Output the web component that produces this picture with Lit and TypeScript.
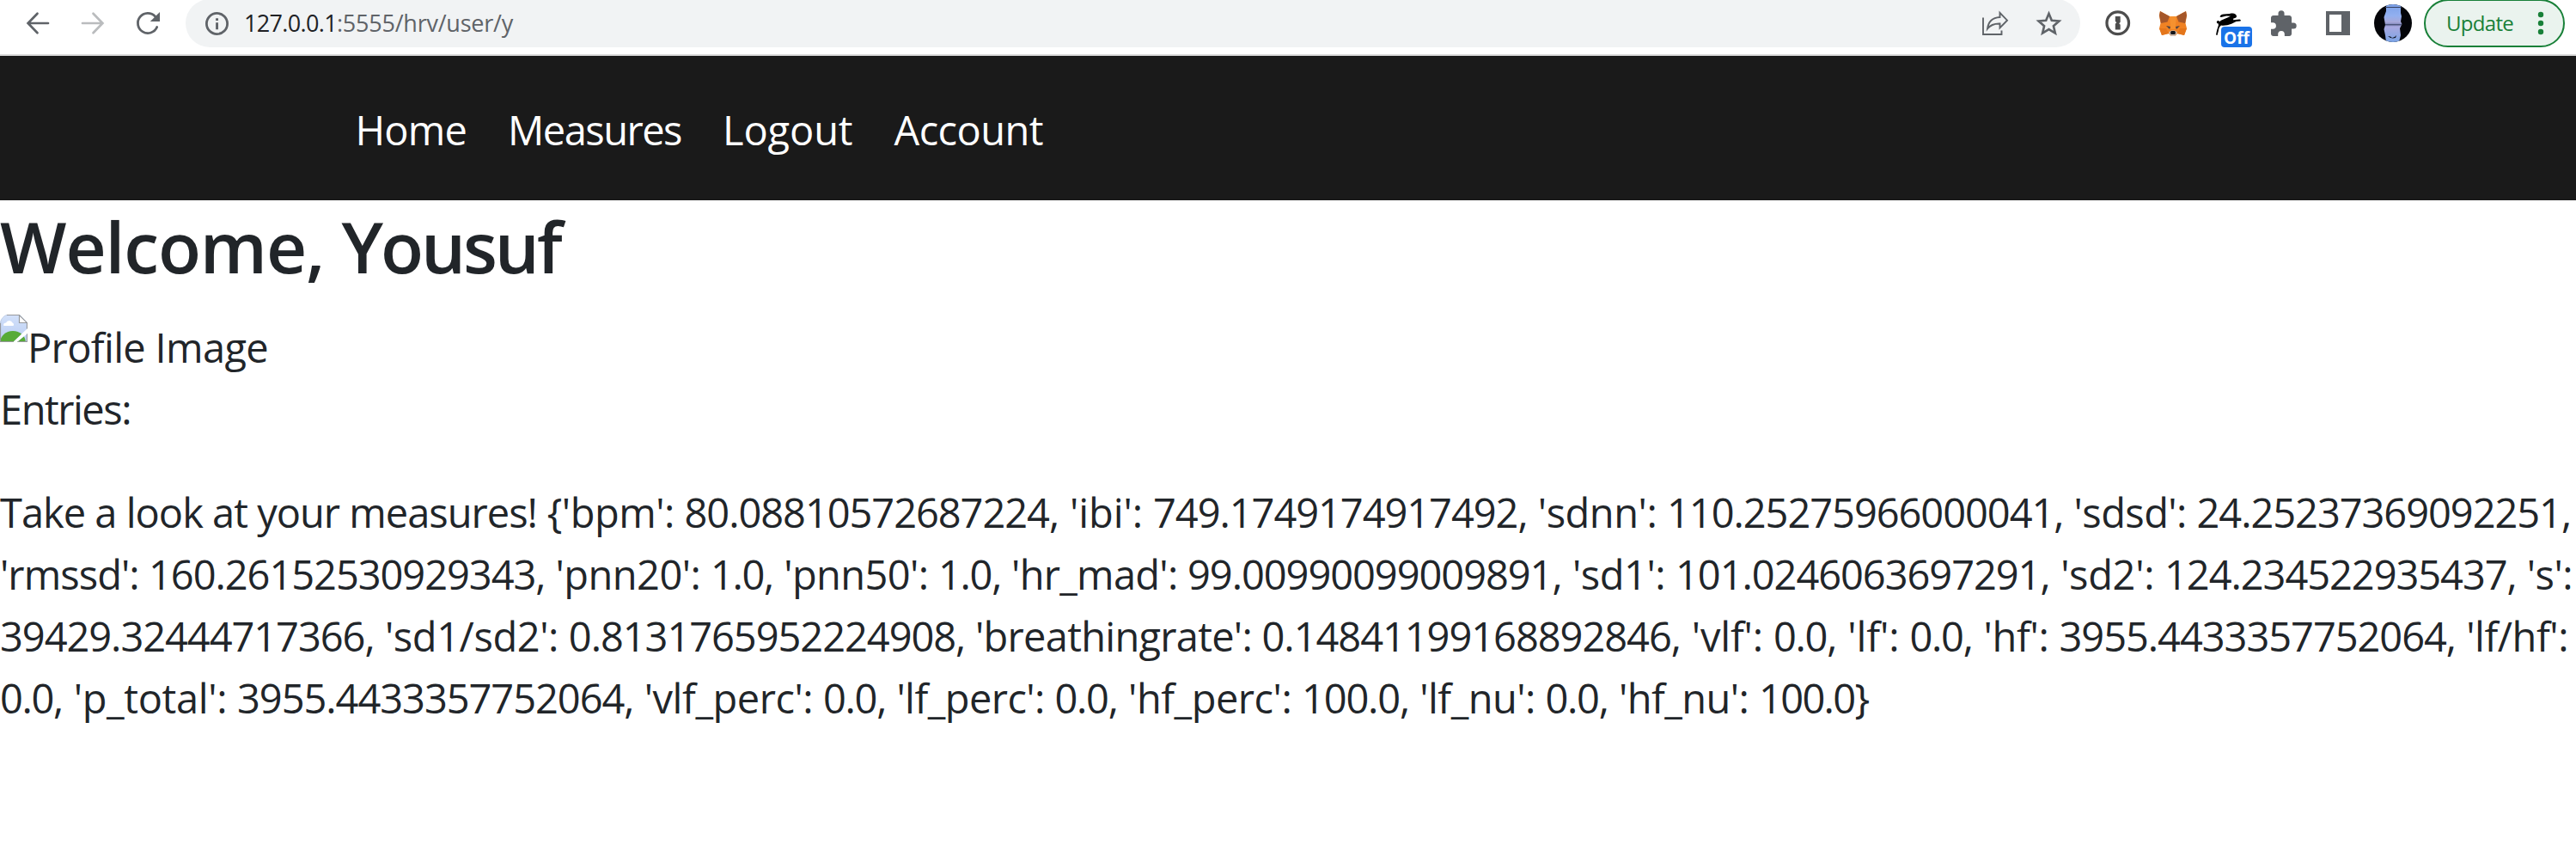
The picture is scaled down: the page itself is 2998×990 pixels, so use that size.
import { LitElement, html, css, svg } from "lit";

type Run = [text: string, width: number];

/** Text whose letter-spacing is computed so that it fills a given advance width. */
class FitText extends LitElement {
  static properties = { text: {}, width: { type: Number } };
  static styles = css`
    :host { display: inline; white-space: pre; font-variant-ligatures: none; }
  `;
  declare text: string;
  declare width: number;
  render() { return html`<span>${this.text}</span>`; }
  updated() {
    const span = this.renderRoot.querySelector("span")!;
    span.style.letterSpacing = "0px";
    const natural = span.getBoundingClientRect().width;
    span.style.letterSpacing = `${(this.width - natural) / this.text.length}px`;
  }
}
customElements.define("fit-text", FitText);

const fit = ([text, width]: Run) => html`<fit-text .text=${text} .width=${width}></fit-text>`;

const NAV: Run[] = [["Home", 129.5], ["Measures", 202], ["Logout", 151.5], ["Account", 173.5]];

const MEASURES: Run[][] = [
  [["Take a look at your measures!", 625], [" {'bpm': ", 171.5], ["80.08810572687224", 424.4], [", 'ibi': ", 121.1],
   ["749.1749174917492", 424.4], [", 'sdnn': ", 173.6], ["110.25275966000041", 450.3],
   [", 'sdsd': ", 166.2], ["24.25237369092251", 424.4], [",", 10.4]],
  [["'rmssd': ", 173], ["160.26152530929343", 450.3], [", 'pnn20': ", 203.7], ["1.0", 62.1],
   [", 'pnn50': ", 202.9], ["1.0", 62.1], [", 'hr_mad': ", 227.9], ["99.00990099009891", 424.4],
   [", 'sd1': ", 143.6], ["101.0246063697291", 424.4], [", 'sd2': ", 144.6], ["124.234522935437", 398.5],
   [", 's':", 76.4]],
  [["39429.32444717366", 424.4], [", 'sd1/sd2': ", 237.4], ["0.8131765952224908", 450.3],
   [", 'breathingrate': ", 356.4], ["0.14841199168892846", 476.2], [", 'vlf': ", 119.3], ["0.0", 62.1],
   [", 'lf': ", 96.4], ["0.0", 62.1], [", 'hf': ", 111.9], ["3955.4433357752064", 450.3], [", 'lf/hf':", 142.2]],
  [["0.0", 62.1], [", 'p_total': ", 213.9], ["3955.4433357752064", 450.3], [", 'vlf_perc': ", 231.7],
   ["0.0", 62.1], [", 'lf_perc': ", 207.4], ["0.0", 62.1], [", 'hf_perc': ", 225.4], ["100.0", 113.9],
   [", 'lf_nu': ", 169.6], ["0.0", 62.1], [", 'hf_nu': ", 186.4], ["100.0", 111.400], ["}", 14]],
];

const back = svg`<path d="M25 13H2.5M12.5 1.8L1.6 13l10.900 11.200" fill="none" stroke="currentColor" stroke-width="2.700" stroke-linecap="round" stroke-linejoin="miter"/>`;

class AppRoot extends LitElement {
  static styles = css`
    :host { display: block; height: 990px; overflow: hidden; background: #fff; color: #212529;
      font-family: "Open Sans", "Noto Sans", sans-serif; }
    svg { display: block; flex: none; overflow: visible; }
    .toolbar { display: flex; align-items: center; height: 54px; padding: 0 13px 9px 31px;
      border-bottom: 2px solid #dadada; color: #5f6368; }
    .forward { margin-left: 38px; color: #babcbe; transform: scaleX(-1); }
    .reload { margin-left: 38px; }
    .omnibox { flex: 1; display: flex; align-items: center; box-sizing: border-box; height: 56px; margin-left: 30px;
      padding: 0 22px 0 23px; border-radius: 28px; background: #f1f3f4; }
    .url { flex: 1; margin-left: 18px; font-size: 27px; line-height: 36px; color: #5f6368; white-space: nowrap; }
    .host { color: #202124; }
    .star { margin-left: 33px; }
    .onepass { margin-left: 29px; }
    .fox { margin-left: 33.500px; }
    .rabbit { position: relative; width: 42px; height: 30px; margin-left: 34px; }
    .badge { position: absolute; left: 6px; top: 19px; width: 36px; height: 24px; border-radius: 4px;
      background: #1a73e8; color: #fff; font-size: 19px; font-weight: 700; line-height: 26px; text-align: center; }
    .puzzle { margin-left: 22px; }
    .panel { margin-left: 35px; }
    .avatar { margin-left: 28px; }
    .update { display: flex; align-items: center; justify-content: space-between; box-sizing: border-box;
      width: 164px; height: 56px; margin-left: 14px; padding: 0 22px 0 24px; border: 2px solid #188038;
      border-radius: 28px; background: #eaf3ee; color: #188038; font-size: 24px; line-height: 32px; }
    nav { display: flex; align-items: center; gap: 48px; box-sizing: border-box; height: 168px; padding: 4px 0 0 413.500px;
      background: #1a1a1a; color: #fff; font-size: 47px; line-height: 72px; }
    h3 { margin: 0; padding-top: 3px; font-size: 82px; font-weight: 600; line-height: 100px; height: 133px; box-sizing: border-box; }
    .profile { display: flex; }
    .text { font-size: 47px; line-height: 72px; }
    .profile, .entries, .line { height: 72px; white-space: nowrap; }
    .shift { padding-top: 2px; }
    .measures { margin: 48px 0 0; }
  `;

  render() {
    return html`
      <header class="toolbar">
        <svg width="26" height="26" viewBox="0 0 26 26">${back}</svg>
        <svg class="forward" width="26" height="26" viewBox="0 0 26 26">${back}</svg>
        <svg class="reload" width="27" height="26" viewBox="0 0 27 26">
          <path d="M23.700 17.500A11.600 11.600 0 1 1 21.500 5" fill="none" stroke="currentColor" stroke-width="2.800" stroke-linecap="round"/>
          <path d="M27 0v11H15.800z" fill="currentColor"/>
        </svg>
        <div class="omnibox">
          <svg width="27" height="27" viewBox="0 0 27 27">
            <circle cx="13.500" cy="13.500" r="12.100" fill="none" stroke="currentColor" stroke-width="2.800"/>
            <path d="M12.100 7.200h2.900v2.900h-2.900zM12.100 12.200h2.900v8h-2.900z" fill="currentColor"/>
          </svg>
          <div class="url"><span class="host">${fit(["127.0.0.1", 108])}</span>${fit([":5555/hrv/user/y", 205])}</div>
          <svg width="30" height="28" viewBox="0 0 30 28">
            <path d="M1 7.500V27H22.500V22.500M6 20.500C7 12 12 7.500 20.500 7V1.800L29 10.700 20.500 19.500V14.500C14 14.300 9.500 16 6 20.500z" fill="none" stroke="currentColor" stroke-width="1.900"/>
          </svg>
          <svg class="star" width="29" height="28" viewBox="0 0 29 28">
            <path d="M14.500 2.800l3.300 8 8.600.7-6.500 5.700 2 8.400-7.400-4.500-7.400 4.500 2-8.400-6.500-5.700 8.600-.7z" fill="none" stroke="currentColor" stroke-width="2.600"/>
          </svg>
        </div>
        <svg class="onepass" width="29.500" height="29.500" viewBox="0 0 30 30">
          <circle cx="15" cy="15" r="13" fill="#fff" stroke="#4d4d4d" stroke-width="3.300"/>
          <path d="M12 7h6v7l-1.500 1.500L18 17v6h-6v-7l1.500-1.500L12 13z" fill="#4d4d4d"/>
        </svg>
        <svg class="fox" width="32" height="29" viewBox="0 0 32 29">
          <path d="M1 0l11 6h8L31 0l1 5-1.500 9 1.500 6-3 8-8-2-2.500 3h-5L11 26l-8 2-3-8 1.500-6L0 5z" fill="#f08223"/>
          <path d="M1 0l11 6-2.500 6.500L2 14 0 5zM31 0L20 6l2.500 6.500L30 14l2-9z" fill="#a5572a"/>
          <path d="M12 6h8l-1.500 15h-5z" fill="#f5912f"/>
          <path d="M0 20h8l3 6-8 2zM32 20h-8l-3 6 8 2z" fill="#e4761b"/>
          <path d="M8 17l5 1-1 3zM24 17l-5 1 1 3z" fill="#4a4145"/>
          <path d="M11 24.500l3-2h4l3 2-2.500 4.500h-5z" fill="#cdbdb1"/>
          <path d="M13 24.500l1-1.500h4l1 1.500-.5 2.500h-5z" fill="#17181c"/>
        </svg>
        <div class="rabbit">
          <svg width="42" height="30" viewBox="0 0 42 30">
            <path d="M4.500 7.500C5 5.500 7 4.700 9 4.500l7-.5c2-.7 5-.6 6.500.4 1.500 1 1.800 2.800 1.300 3.600-.8 1-2.300 1.200-3.300 1.200l-.5 2 7.500-.6 1.500.8-.5 1.200-5 .4-5.500 2.800C14 17.500 9 18 6 17.500c-2 1.500-2.800 3.500-3 6L1.500 29 0 28.500l1-5 2-6.500c-1-2 1-4.500 4-5.800L14.500 8 17 6.800l-5-.3-6 1.500z" fill="#000"/>
            <circle cx="2.500" cy="13.800" r="1.700" fill="#000"/>
          </svg>
          <div class="badge">Off</div>
        </div>
        <svg class="puzzle" width="29" height="29" viewBox="2 1.500 20.500 20.500">
          <path d="M20.500 11H19V7c0-1.100-.9-2-2-2h-4V3.500a2.500 2.500 0 0 0-5 0V5H4c-1.100 0-2 .9-2 2v3.800h1.500a2.700 2.700 0 0 1 0 5.400H2V20c0 1.100.9 2 2 2h3.800v-1.500a2.700 2.700 0 0 1 5.400 0V22H17c1.100 0 2-.9 2-2v-4h1.500a2.500 2.500 0 0 0 0-5z" fill="currentColor"/>
        </svg>
        <svg class="panel" width="28" height="28" viewBox="0 0 28 28">
          <path d="M0 0h28v28H0zM4 4v20h14V4z" fill="currentColor" fill-rule="evenodd"/>
        </svg>
        <svg class="avatar" width="44" height="44" viewBox="0 0 44 44">
          <defs>
            <clipPath id="round"><circle cx="22" cy="22" r="22"/></clipPath>
            <linearGradient id="sky" x1="0" y1="0" x2="0" y2="1">
              <stop offset="0" stop-color="#7ba0e8"/><stop offset=".3" stop-color="#92b0f0"/><stop offset=".47" stop-color="#a8a8d8"/>
              <stop offset=".53" stop-color="#8289bd"/><stop offset=".6" stop-color="#a9a9e0"/><stop offset="1" stop-color="#7ba4e6"/>
            </linearGradient>
          </defs>
          <g clip-path="url(#round)">
            <rect width="44" height="44" fill="#040509"/>
            <path d="M14 0h17v10l1 4-1 6 1.500 3-2.500 5 1 8-2 8H14l-1-8-1.500-7 1.500-5-1.500-9L14 8z" fill="url(#sky)"/>
            <path d="M13 3.500h19M13 23.800h19" stroke="#36405f" stroke-width="1"/>
            <path d="M16 37l3 .5 2 1.500 3-1 2-2-1 3-3 .5-3-.5z" fill="#0a0d18"/>
          </g>
        </svg>
        <div class="update">
          <span>${fit(["Update", 78])}</span>
          <svg width="8" height="28" viewBox="0 0 8 28">
            <g fill="#188038"><circle cx="4" cy="4" r="3.200"/><circle cx="4" cy="14" r="3.200"/><circle cx="4" cy="24" r="3.200"/></g>
          </svg>
        </div>
      </header>
      <nav>${NAV.map(fit)}</nav>
      <main>
        <h3>${fit(["Welcome, ", 397.5])}${fit(["Yousuf", 254])}</h3>
        <div class="text profile">
          <svg width="32" height="32" viewBox="0 0 32 32">
            <defs>
              <linearGradient id="paper" x1="0" y1="0" x2="0" y2="1"><stop offset="0" stop-color="#d3e1fa"/><stop offset="1" stop-color="#b9cdf3"/></linearGradient>
              <clipPath id="page"><path d="M8 0H23L32 9V16L15 32H0V9C1 5 4 1 8 0zM32 22V32H20z"/></clipPath>
            </defs>
            <g clip-path="url(#page)">
              <rect width="32" height="32" fill="url(#paper)"/>
              <ellipse cx="15" cy="33" rx="15" ry="14" fill="#57ab37"/>
              <path d="M4 12.500a3 3 0 0 1 3-3 4 4 0 0 1 7.500 0 2.200 2.200 0 0 1 1 3.500H5z" fill="#fff"/>
              <path d="M22 0v9h10z" fill="#fff"/>
              <path d="M22.500 1v8.500H32M8 .5H22.500L31.500 9.500V32M.5 9V31.500H32" fill="none" stroke="#97999c" stroke-width="1.200"/>
              <path d="M.5 10C1 5 4 1 8 .5" fill="none" stroke="#bfcbe0" stroke-width="1"/>
            </g>
          </svg>
          <div class="shift">${fit(["Profile Image", 280])}</div>
        </div>
        <div class="text entries shift">${fit(["Entries:", 152])}</div>
        <div class="text measures">${MEASURES.map((line) => html`<div class="line">${line.map(fit)}</div>`)}</div>
      </main>
    `;
  }
}
customElements.define("app-root", AppRoot);
